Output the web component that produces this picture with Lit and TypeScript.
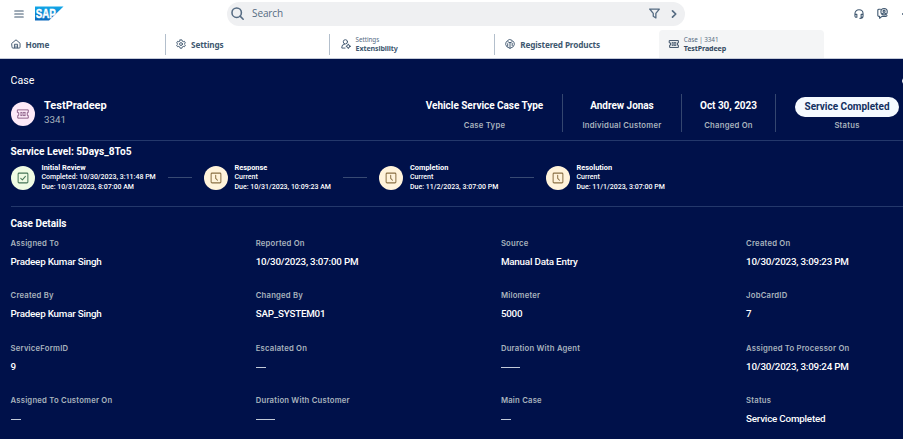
import { LitElement, html, css, svg, nothing } from "lit";
import { customElement } from "lit/decorators.js";

const icons: Record<string, unknown> = {
  menu: svg`<path d="M2.300 4h11.400M2.300 8h11.400M2.300 12h11.400"/>`,
  search: svg`<circle cx="7" cy="7" r="5.8"/><path d="M11.200 11.200L15 15"/>`,
  filter: svg`<path d="M1 1.500h14L10 7.800v6.700L6.200 12V7.800z"/>`,
  chevron: svg`<path d="M6 3.800L10.300 8 6 12.200"/>`,
  headset: svg`<path d="M1.500 11V7.6C1.500 3.800 4.400 1.200 8 1.200S14.500 3.800 14.500 7.600V11M1.600 8.600h3v4.600H3.600A2 2 0 0 1 1.500 11M14.400 8.600h-3v4.600h1a2 2 0 0 0 2.100-2.200M14.500 11c0 2.800-1.800 4-5 4"/>`,
  chat: svg`<path d="M5 1.800H3A1.600 1.600 0 0 0 1.200 3.400v7.200a1.600 1.600 0 0 0 1.800 1.600h.8V15l3.400-2.800h5.600a1.600 1.600 0 0 0 1.700-1.600"/><circle cx="10.3" cy="5.4" r="4.600"/><circle cx="10.3" cy="4.6" r="1.500"/><path d="M7.600 8.400c1.400-1.600 4-1.600 5.400 0"/>`,
  home: svg`<path d="M1.500 6.800L8 1.300l6.500 5.500V13a1.500 1.500 0 0 1-1.500 1.500H3A1.500 1.500 0 0 1 1.500 13zM5.500 14V8.400h5V14M8 11v2.500"/>`,
  gear: svg`<path d="M6.500 1.400h3l.5 2 1.500.9 2-.6 1.500 2.600L13.500 7.800v.6L15 9.800l-1.500 2.600-2-.6-1.500.9-.5 2h-3l-.5-2-1.500-.9-2 .6L1 9.800l1.500-1.400v-.6L1 6.300l1.500-2.600 2 .6L6 3.400z"/><circle cx="8" cy="8.100" r="2.300"/>`,
  extension: svg`<circle cx="7" cy="4.500" r="3.400"/><path d="M6.500 14.500H1.300v-1.600A4.400 4.400 0 0 1 5.500 8.400"/><circle cx="11.700" cy="11.700" r="2.500"/><path d="M11.700 8.300v1M11.700 14.100v1M8.300 11.700h1M14.100 11.700h1"/>`,
  product: svg`<path d="M8 1l3.400 1.200L14.200 5l.8 3.500-1.800 3.800L8 15l-5.200-2.700L1 8.500 1.800 5l2.800-2.800zM4.500 4.400L8 6l3.500-1.600M8 6v8.500M4.300 7.500v4M11.500 7v3.500"/>`,
  ticket: svg`<path d="M1 2.500h14v3.600h-1.300v3.800H15v3.600H1V9.900h1.300V6.100H1z"/><path d="M5 5.900h1.800M8.500 5.900H11M4.600 8h6.800M5 10.100h1.800M8.500 10.100H11"/>`,
  check: svg`<rect x="1.500" y="1.500" width="13" height="13" rx="1.300"/><path d="M5 8.400l2.200 2.100L11.200 5.800"/>`,
  clock: svg`<rect x="1.500" y="1.500" width="13" height="13" rx="1.300"/><path d="M7.600 4.400v4.200l2.400 2.400"/>`,
};

const icon = (name: string) => html`<svg class="icon ${name}" viewBox="0 0 16 16" fill="none" stroke="currentColor">${icons[name]}</svg>`;

const base = css`
  :host { display: block; box-sizing: border-box; }
  *, *::before, *::after { box-sizing: border-box; }
  .icon { display: block; flex: none; overflow: visible; stroke-width: 1.5; stroke-linejoin: round; stroke-linecap: round; }
`;

@customElement("shell-bar")
class ShellBar extends LitElement {
  static styles = [base, css`
    :host { height: 29px; background: #fff; color: #405870; overflow: hidden; }
    .bar { display: flex; align-items: center; height: 27px; width: 920px; padding-left: 12.500px; }
    .menu { width: 12px; height: 12px; stroke-width: 1.400; }
    .logo { width: 29px; height: 15px; margin-left: 10.500px; display: block; }
    .logo text { font: bold 12px "Liberation Sans", sans-serif; fill: #fff; stroke: #fff; stroke-width: .4px; }
    .field { display: flex; align-items: center; width: 458px; height: 24px; margin-left: 163px; border-radius: 12px; background: #eff0f2; padding: 0 5px 0 4px; font: 10px "Open Sans", sans-serif; color: #556b82; }
    .field span { flex: 1; padding: 0 0 1px 8px; letter-spacing: -.1px; }
    .search { width: 13px; height: 13px; stroke-width: 1.900; }
    .filter { width: 11px; height: 11px; stroke-width: 1.900; margin-right: 8px; }
    .chevron { width: 12px; height: 12px; stroke-width: 2.300; }
    .headset { width: 10px; height: 10px; margin-left: 169px; stroke-width: 1.700; }
    .chat { width: 11px; height: 11px; margin-left: 13px; stroke-width: 1.600; }
    .more { width: 8px; height: 2px; margin-left: 14px; background: #405870; border-radius: 1px; }
  `];
  render() {
    return html`<div class="bar">
      ${icon("menu")}
      <svg class="logo" viewBox="0 0 29 15">
        <defs><linearGradient id="g" x2="0" y2="1"><stop stop-color="#12a7e8"/><stop offset="1" stop-color="#0a68bd"/></linearGradient></defs>
        <path d="M0 0.500H28.500L14 14.500H0z" fill="url(#g)"/>
        <text x="0.800" y="11.500" textLength="20" lengthAdjust="spacingAndGlyphs">SAP</text>
      </svg>
      <div class="field">${icon("search")}<span>Search</span>${icon("filter")}${icon("chevron")}</div>
      ${icon("headset")}${icon("chat")}<i class="more"></i>
    </div>`;
  }
}

interface Tab { icon: string; title: string; over?: string; active?: boolean }

@customElement("tab-strip")
class TabStrip extends LitElement {
  static styles = [base, css`
    :host { height: 30px; background: #fff; border-bottom: 1px solid #c4cad8; color: #405870; font-family: "Noto Sans", sans-serif; }
    .tabs { display: grid; grid-template-columns: 165.500px repeat(4, 164.600px); padding-top: 1px; }
    .tab { display: flex; align-items: center; gap: 5px; height: 28px; padding-left: 10.500px; border-right: 1px solid transparent; border-image: linear-gradient(transparent 5px, #b3bfcc 5px, #b3bfcc 24px, transparent 24px) 1; }
    .tab:nth-child(n+4) { border-image: none; }
    .tab .plain { padding-top: 1px; }
    .active { background: #f4f5f6; border-radius: 4px 4px 0 0; padding-left: 9.500px; color: #32485f; }
    .icon { width: 10px; height: 10px; stroke-width: 1.500; }
    .title { font-size: 8.200px; font-weight: 700; line-height: 12px; letter-spacing: -.13px; }
    .sub .title { font-size: 7.100px; line-height: 9px; letter-spacing: -.12px; }
    .over { font-size: 6.300px; line-height: 9px; color: #556b82; letter-spacing: -.05px; }
  `];
  tabs: Tab[] = [
    { icon: "home", title: "Home" },
    { icon: "gear", title: "Settings" },
    { icon: "extension", title: "Extensibility", over: "Settings" },
    { icon: "product", title: "Registered Products" },
    { icon: "ticket", title: "TestPradeep", over: "Case | 3341", active: true },
  ];
  render() {
    return html`<div class="tabs">${this.tabs.map(t => html`
      <div class="tab ${t.active ? "active" : ""}">${icon(t.icon)}
        <div class=${t.over ? "sub" : "plain"}>${t.over ? html`<div class="over">${t.over}</div>` : nothing}<div class="title">${t.title}</div></div>
      </div>`)}</div>`;
  }
}

@customElement("case-header")
class CaseHeader extends LitElement {
  static styles = [base, css`
    :host { height: 81px; padding-top: 14px; color: #fff; font-family: Roboto, sans-serif; overflow: hidden; }
    .top { display: flex; justify-content: space-between; height: 15px; line-height: 15px; font-size: 10.600px; width: 899px; }
    .edge { width: 8px; height: 8px; border: 1px solid #fff; border-radius: 4px; margin-top: 4px; }
    .row { display: flex; height: 38px; margin-top: 6px; width: 903px; }
    .avatar { flex: none; width: 24px; height: 24px; margin-top: 7.500px; border-radius: 50%; background: #fdeaf8; color: #85557f; display: grid; place-items: center; }
    .avatar .icon { width: 12px; height: 12px; stroke-width: 1.200; }
    .name { flex: none; width: 372px; padding: 4.500px 0 0 9.500px; }
    .name b { display: block; font-size: 11px; line-height: 14.500px; }
    .name span { display: block; font-size: 9.800px; line-height: 14px; color: #a9b4be; }
    .fact { flex: none; display: flex; flex-direction: column; align-items: center; padding: 4px 0 0 1px; border-right: 1px solid #34466f; white-space: nowrap; }
    .type { width: 156px; }
    .who { width: 119px; }
    .when { width: 94px; }
    .state { width: 142px; border: 0; padding-top: 3px; }
    .value { font-size: 10px; font-weight: 700; line-height: 16px; letter-spacing: -.04px; }
    .label { font: 600 7.700px/12px Inter, sans-serif; letter-spacing: .24px; color: #a9b4be; margin-top: 6px; }
    .state .value { width: 104px; height: 20px; border-radius: 10px; background: #f5faff; color: #12305f; text-align: center; line-height: 20px; letter-spacing: 0; }
    .state .label { margin-top: 3px; }
  `];
  render() {
    const fact = (cls: string, value: string, label: string) => html`<div class="fact ${cls}"><div class="value">${value}</div><div class="label">${label}</div></div>`;
    return html`
      <div class="top"><span>Case</span><i class="edge"></i></div>
      <div class="row">
        <div class="avatar">${icon("ticket")}</div>
        <div class="name"><b>TestPradeep</b><span>3341</span></div>
        ${fact("type", "Vehicle Service Case Type", "Case Type")}
        ${fact("who", "Andrew Jonas", "Individual Customer")}
        ${fact("when", "Oct 30, 2023", "Changed On")}
        ${fact("state", "Service Completed", "Status")}
      </div>`;
  }
}

@customElement("service-level")
class ServiceLevel extends LitElement {
  static styles = [base, css`
    :host { height: 67px; border: 1px solid #24386b; border-width: 1px 0; color: #fff; font-family: Roboto, sans-serif; }
    .title { font: 700 10.100px/14px Roboto, sans-serif; padding-top: 4px; }
    .steps { display: grid; grid-template-columns: 193px 175.500px 166.500px 160px; margin-top: 4px; }
    .step { display: flex; align-items: center; height: 29px; }
    .dot { width: 24px; height: 24px; border-radius: 50%; background: #fff3db; color: #8a7044; display: grid; place-items: center; flex: none; }
    .done { background: #effbe3; color: #467557; }
    .dot .icon { width: 12px; height: 12px; stroke-width: 1.350; }
    .text { padding: 1px 0 0 7px; font-size: 7px; line-height: 9.800px; white-space: nowrap; flex: 1; font-weight: 500; }
    .text b { display: block; font-weight: 700; font-size: 7.400px; }
    .text span { display: block; }
    .line { width: 24px; height: 1px; background: #384a73; margin-right: 12px; }
  `];
  steps = [
    ["Initial Review", "Completed: 10/30/2023, 3:11:48 PM", "Due: 10/31/2023, 8:07:00 AM"],
    ["Response", "Current", "Due: 10/31/2023, 10:09:23 AM"],
    ["Completion", "Current", "Due: 11/2/2023, 3:07:00 PM"],
    ["Resolution", "Current", "Due: 11/1/2023, 3:07:00 PM"],
  ];
  render() {
    return html`<div class="title">Service Level: 5Days_8To5</div>
      <div class="steps">${this.steps.map(([name, state, due], i) => html`<div class="step">
        <div class="dot ${i ? "" : "done"}">${icon(i ? "clock" : "check")}</div>
        <div class="text"><b>${name}</b><span>${state}</span><span>${due}</span></div>
        ${i < 3 ? html`<i class="line"></i>` : nothing}
      </div>`)}</div>`;
  }
}

@customElement("case-details")
class CaseDetails extends LitElement {
  static styles = [base, css`
    :host { padding-top: 10px; color: #fff; font-family: Roboto, sans-serif; }
    .title { font-size: 10px; font-weight: 700; line-height: 14px; }
    .grid { display: grid; grid-template-columns: repeat(4, 245.200px); grid-auto-rows: 52.400px; margin-top: 7px; }
    .label { font: 600 7.700px/12px Inter, sans-serif; letter-spacing: .22px; color: #a9b4be; }
    .value { font-size: 9.800px; font-weight: 500; line-height: 14px; margin-top: 5px; letter-spacing: -.2px; }
    .dash { width: 10.500px; height: 1px; background: #c3cbd8; margin-top: 12px; }
    .long { width: 19px; }
  `];
  fields = [
    ["Assigned To", "Pradeep Kumar Singh"], ["Reported On", "10/30/2023, 3:07:00 PM"], ["Source", "Manual Data Entry"], ["Created On", "10/30/2023, 3:09:23 PM"],
    ["Created By", "Pradeep Kumar Singh"], ["Changed By", "SAP_SYSTEM01"], ["Milometer", "5000"], ["JobCardID", "7"],
    ["ServiceFormID", "9"], ["Escalated On", "-"], ["Duration With Agent", "--"], ["Assigned To Processor On", "10/30/2023, 3:09:24 PM"],
    ["Assigned To Customer On", "-"], ["Duration With Customer", "--"], ["Main Case", "-"], ["Status", "Service Completed"],
  ];
  render() {
    return html`<div class="title">Case Details</div>
      <div class="grid">${this.fields.map(([label, value]) => html`<div>
        <div class="label">${label}</div>
        ${value[0] === "-" ? html`<div class="dash ${value.length > 1 ? "long" : ""}"></div>` : html`<div class="value">${value}</div>`}
      </div>`)}</div>`;
  }
}

@customElement("app-root")
class AppRoot extends LitElement {
  static styles = [base, css`
    :host { width: 903px; height: 439px; overflow: hidden; background: #00114a; }
    .page { padding-left: 10.500px; overflow: hidden; }
  `];
  render() {
    return html`<shell-bar></shell-bar><tab-strip></tab-strip>
      <div class="page"><case-header></case-header><service-level></service-level><case-details></case-details></div>`;
  }
}
